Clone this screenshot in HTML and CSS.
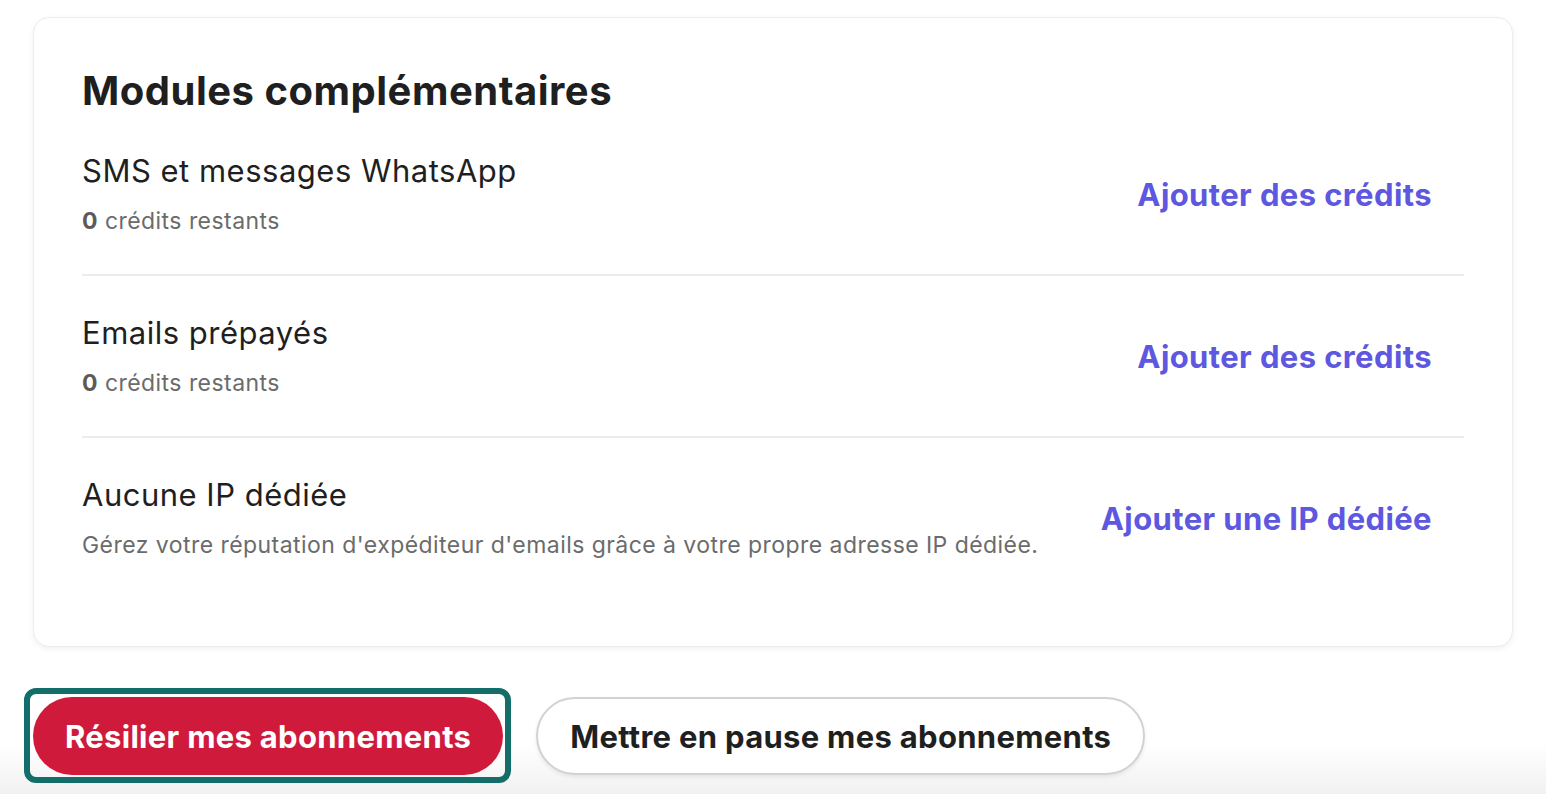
FILE: index.html
```html
<!DOCTYPE html>
<html lang="fr">
<head>
    <meta charset="UTF-8">
    <meta name="viewport" content="width=device-width, initial-scale=1.0">
    <title>Modules complémentaires</title>
    <link rel="stylesheet" href="styles.css">
</head>
<body>
    <main class="page">
        <section class="card">
            <h2 class="card-title">Modules complémentaires</h2>

            <div class="addon-row">
                <div class="addon-info">
                    <div class="addon-name">SMS et messages WhatsApp</div>
                    <div class="addon-meta"><strong>0</strong> crédits restants</div>
                </div>
                <a href="#" class="addon-link">Ajouter des crédits</a>
            </div>

            <div class="addon-row">
                <div class="addon-info">
                    <div class="addon-name">Emails prépayés</div>
                    <div class="addon-meta"><strong>0</strong> crédits restants</div>
                </div>
                <a href="#" class="addon-link">Ajouter des crédits</a>
            </div>

            <div class="addon-row">
                <div class="addon-info">
                    <div class="addon-name">Aucune IP dédiée</div>
                    <div class="addon-meta">Gérez votre réputation d'expéditeur d'emails grâce à votre propre adresse IP dédiée.</div>
                </div>
                <a href="#" class="addon-link">Ajouter une IP dédiée</a>
            </div>
        </section>

        <div class="actions">
            <button type="button" class="btn btn-danger is-focused">Résilier mes abonnements</button>
            <button type="button" class="btn btn-secondary">Mettre en pause mes abonnements</button>
        </div>
    </main>
</body>
</html>
```

FILE: styles.css
```css
html, body {
    height: 100%;
}

body {
    margin: 0;
    font-family: Inter, "Noto Sans", Arial, sans-serif;
    color: #1f1f1f;
    background: linear-gradient(to bottom, #ffffff 0, #ffffff calc(100% - 50px), #f1f1f1 100%);
}

.page {
    padding: 17px 33px 0 33px;
}

.card {
    background: white;
    border: 1px solid #ececec;
    border-radius: 16px;
    box-shadow: 0 2px 6px rgba(0, 0, 0, 0.06);
    padding: 50px 48px 48px 48px;
}

.card-title {
    margin: 0;
    font-size: 40px;
    line-height: 46px;
    font-weight: 700;
    letter-spacing: 0.5px;
}

.addon-row {
    display: flex;
    justify-content: space-between;
    align-items: center;
    padding: 37px 0;
    border-bottom: 2px solid #ececec;
}

.addon-row:last-child {
    border-bottom: none;
}

.addon-name {
    font-size: 31px;
    line-height: 40px;
    letter-spacing: 0.5px;
}

.addon-meta {
    margin-top: 14px;
    font-size: 23px;
    line-height: 32px;
    letter-spacing: 0.45px;
    color: #6b6b6b;
}

.addon-meta strong {
    font-weight: 700;
    color: #5a5a5a;
}

.addon-link {
    color: #5e57e0;
    font-size: 31px;
    font-weight: 700;
    letter-spacing: 0.4px;
    text-decoration: none;
    padding-right: 32px;
    white-space: nowrap;
}

.actions {
    display: flex;
    gap: 33px;
    margin-top: 50px;
}

.btn {
    position: relative;
    height: 78px;
    padding: 0 32px;
    border-radius: 39px;
    font-family: Inter, "Noto Sans", Arial, sans-serif;
    font-size: 31px;
    font-weight: 700;
    letter-spacing: 0.3px;
    cursor: pointer;
}

.btn-danger {
    background-color: #cf1a3c;
    color: white;
    border: none;
}

.btn-secondary {
    background-color: white;
    color: #1f1f1f;
    border: 2px solid #d2d2d2;
    box-shadow: 0 2px 4px rgba(0, 0, 0, 0.08);
}

.is-focused::after {
    content: "";
    position: absolute;
    top: -9px;
    left: -9px;
    right: -8px;
    bottom: -8px;
    border: 6px solid #136d69;
    border-radius: 12px;
    pointer-events: none;
}
```
